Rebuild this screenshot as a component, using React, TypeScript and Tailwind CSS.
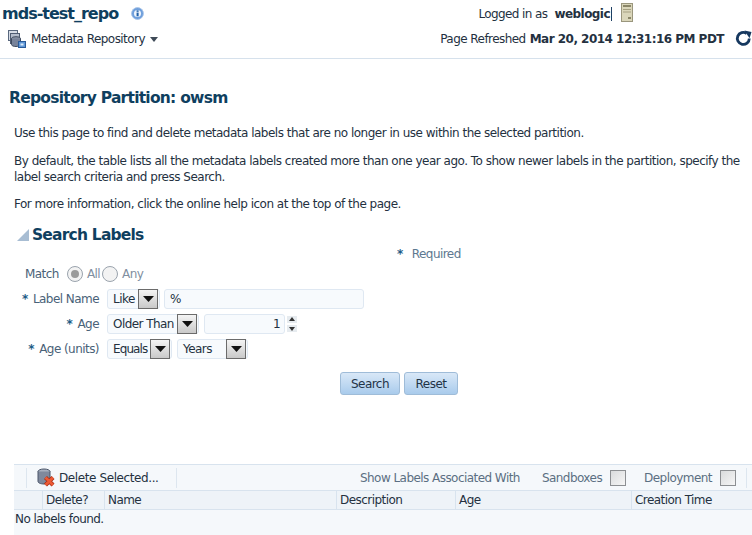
import React from "react";

function InfoIcon() {
  return (
    <svg width="13" height="13" viewBox="0 0 14 14">
      <circle cx="7" cy="7" r="6.4" fill="#6f9fdc" stroke="#a9c5e8" />
      <circle cx="7" cy="7" r="3.8" fill="#eef4fc" />
      <rect x="6" y="6" width="2.2" height="4" fill="#1f5fa8" />
      <rect x="6" y="3.6" width="2.2" height="1.6" fill="#1f5fa8" />
    </svg>
  );
}

function RepoIcon() {
  return (
    <svg width="19" height="19" viewBox="0 0 19 19">
      <rect x="1.500" y="0.500" width="9" height="10" fill="#d6dce6" stroke="#59687e" />
      <rect x="3.500" y="3.500" width="9" height="10" fill="#b4bdcc" stroke="#4f5c72" />
      <ellipse cx="9" cy="8.500" rx="4.500" ry="1.800" fill="#8b95a8" stroke="#3e4a5e" />
      <path d="M4.500 8.500v6c0 1.200 2 2 4.500 2s4.500-.8 4.500-2v-6" fill="#78839a" stroke="#3e4a5e" />
      <rect x="11.500" y="11.500" width="7" height="6" fill="#5f97d6" stroke="#2a5a98" />
      <rect x="13.500" y="13.500" width="3" height="2" fill="#dcebfa" />
    </svg>
  );
}

function ServerIcon() {
  return (
    <svg width="12" height="19" viewBox="0 0 12 19">
      <rect x="0.500" y="0.500" width="11" height="18" fill="#dad6ba" stroke="#9a967d" />
      <rect x="2" y="2" width="8" height="2" fill="#8a8668" />
      <rect x="2" y="6" width="8" height="1" fill="#a5a081" />
      <rect x="2" y="8.500" width="8" height="1" fill="#a5a081" />
      <rect x="7" y="14" width="3" height="2" fill="#8a8668" />
    </svg>
  );
}

function RefreshIcon() {
  return (
    <svg width="17" height="18" viewBox="0 0 17 18" fill="none">
      <path d="M14.300 8.500a6 6 0 1 1-2.600-5" stroke="#16385f" strokeWidth="2.800" />
      <path d="M9.500 0.500l7 1.500-2 6.200z" fill="#16385f" />
    </svg>
  );
}

function DeleteIcon() {
  return (
    <svg width="19" height="19" viewBox="0 0 19 19">
      <ellipse cx="7" cy="3.500" rx="6" ry="2.500" fill="#a8b0bf" stroke="#4a5568" />
      <path d="M1 3.500v10c0 1.400 2.700 2.500 6 2.500s6-1.100 6-2.500v-10" fill="#7f899c" stroke="#4a5568" />
      <path d="M8.500 9.500l7.500 7.500M16 9.500l-7.500 7.500" stroke="#a32a14" strokeWidth="4.200" />
      <path d="M8.500 9.500l7.500 7.500M16 9.500l-7.500 7.500" stroke="#ec5a34" strokeWidth="2.800" />
    </svg>
  );
}

function Caret() {
  return (
    <svg width="8" height="5" viewBox="0 0 8 5">
      <path d="M0 0h8L4 5z" fill="#3f4a57" />
    </svg>
  );
}

function SelectBtn() {
  return (
    <span className="flex h-[20px] w-[20px] shrink-0 items-center justify-center border border-[#6b6b6b] bg-gradient-to-b from-[#f4f4f4] to-[#c9c9c9]">
      <svg width="11" height="6" viewBox="0 0 11 6">
        <path d="M0 0h11L5.500 6z" fill="#111" />
      </svg>
    </span>
  );
}

function Select({ text, w, tight }: { text: string; w: string; tight?: boolean }) {
  return (
    <div className={`flex h-[20px] items-center justify-between rounded-[3px] border border-[#dfe8f2] bg-[#f7fafd] pl-[5px] pr-[1px] ${w}`}>
      <span className={`whitespace-nowrap text-[#24313f] ${tight ? "tracking-[-0.9px]" : ""}`}>{text}</span>
      <SelectBtn />
    </div>
  );
}

function Radio({ checked }: { checked?: boolean }) {
  return (
    <span className="flex h-[16px] w-[16px] items-center justify-center rounded-full border border-[#9aa3ad] bg-[#f3f3f3]">
      {checked && <span className="h-[8px] w-[8px] rounded-full bg-[#9b9b9b]" />}
    </span>
  );
}

function Check() {
  return <span className="h-[16px] w-[16px] border border-[#8c8f92] bg-gradient-to-br from-[#d9dbdc] to-[#f6f6f6]" />;
}

function Star() {
  return <span className="mr-[2px] font-bold text-[#1d5c86]">*</span>;
}

function Row({ label, children }: { label: React.ReactNode; children: React.ReactNode }) {
  return (
    <div className="flex h-[25px] items-center">
      <div className="w-[99px] whitespace-nowrap text-right text-[#4a6278]">{label}</div>
      <div className="ml-[8px] flex items-center gap-[4px]">{children}</div>
    </div>
  );
}

const cols = "grid grid-cols-[28px_62px_232px_119px_176px_107px]";

export default function App() {
  return (
    <div
      className="flex h-[535px] w-[752px] flex-col overflow-hidden bg-white text-[12px] leading-[16px] text-[#24313f]"
      style={{ fontFamily: '"DejaVu Sans", sans-serif', letterSpacing: "-0.55px" }}
    >
      <header className="h-[59px] shrink-0 border-b border-[#d6e1ec] pl-[3px]">
        <div className="flex h-[27px] items-center justify-between">
          <div className="ml-[-1px] flex items-center gap-[13px]">
            <span className="text-[16px] font-bold text-[#0f3f5f]" style={{ letterSpacing: "-1px" }}>mds-test_repo</span>
            <InfoIcon />
          </div>
          <div className="mr-[119px] flex items-center">
            <span className="mr-[7px]" style={{ letterSpacing: "-0.6px" }}>Logged in as</span>
            <span className="font-bold">weblogic</span>
            <span className="mx-[1px] h-[14px] w-px bg-[#1d3f63]" />
            <span className="ml-[8px] mt-[-3px] flex"><ServerIcon /></span>
          </div>
        </div>
        <div className="flex h-[24px] items-center justify-between">
          <div className="flex items-center">
            <span className="ml-[4px]"><RepoIcon /></span>
            <span className="ml-[5px]">Metadata Repository</span>
            <span className="ml-[5px]"><Caret /></span>
          </div>
          <div className="flex items-center">
            <span>Page Refreshed</span>
            <span className="ml-[4px] font-bold" style={{ letterSpacing: "-0.52px" }}>Mar 20, 2014 12:31:16 PM PDT</span>
            <span className="ml-[11px] flex"><RefreshIcon /></span>
          </div>
        </div>
      </header>

      <main className="flex min-h-0 flex-1 flex-col">
        <h1 className="ml-[9px] mt-[29px] text-[15.5px] font-bold leading-[20px] text-[#0f3f5f]" style={{ letterSpacing: "-0.75px" }}>
          Repository Partition: owsm
        </h1>
        <div className="ml-[14px] mr-[8px] mt-[17px]" style={{ letterSpacing: "-0.5px" }}>
          <p>Use this page to find and delete metadata labels that are no longer in use within the selected partition.</p>
          <p className="mt-[12px]">By default, the table lists all the metadata labels created more than one year ago. To show newer labels in the partition, specify the label search criteria and press Search.</p>
          <p className="mt-[11px]">For more information, click the online help icon at the top of the page.</p>
        </div>

        <div className="ml-[17px] mt-[12px] flex h-[22px] items-center gap-[3px]">
          <svg width="12" height="12" viewBox="0 0 12 12"><path d="M12 0v12H0z" fill="#a8bdd3" /></svg>
          <h2 className="text-[15.5px] font-bold text-[#0f3f5f]" style={{ letterSpacing: "-0.8px" }}>Search Labels</h2>
        </div>

        <div className="ml-[397px] mt-[-1px] flex h-[18px] items-center text-[#5d7890]">
          <span className="font-bold text-[#1d5c86]">*</span><span className="ml-[9px]">Required</span>
        </div>

        <div className="mt-[-1px] flex h-[23px] items-center pl-[25px] text-[#4a6278]">
          <span>Match</span>
          <span className="ml-[8px]"><Radio checked /></span>
          <span className="ml-[4px] text-[#7f8f9f]">All</span>
          <span className="ml-[2px]"><Radio /></span>
          <span className="ml-[4px] text-[#7f8f9f]">Any</span>
        </div>

        <div className="mt-[1px] flex flex-col">
          <Row label={<><Star /> Label Name</>}>
            <Select text="Like" w="w-[53px]" />
            <div className="flex h-[20px] w-[200px] items-center rounded-[3px] border border-[#dfe8f2] bg-[#f7fafd] pl-[5px]">%</div>
          </Row>
          <Row label={<><Star /> Age</>}>
            <Select text="Older Than" w="w-[92px]" />
            <div className="ml-[1px] flex items-center gap-[2px]">
              <div className="flex h-[20px] w-[81px] items-center justify-end rounded-[3px] border border-[#dfe8f2] bg-[#f7fafd] pr-[4px]">1</div>
              <div className="flex flex-col gap-[2px]">
                <svg width="10" height="7" viewBox="0 0 10 7"><rect width="10" height="7" fill="#e6ebef" /><path d="M2 5h6L5 1z" fill="#333" /></svg>
                <svg width="10" height="7" viewBox="0 0 10 7"><rect width="10" height="7" fill="#e6ebef" /><path d="M2 2h6L5 6z" fill="#333" /></svg>
              </div>
            </div>
          </Row>
          <Row label={<><Star /> Age (units)</>}>
            <Select text="Equals" w="w-[65px]" tight />
            <div className="ml-[1px]"><Select text="Years" w="w-[71px]" /></div>
          </Row>
        </div>

        <div className="ml-[340px] mt-[11px] flex gap-[4px]">
          <button className="h-[23px] w-[60px] rounded-[3px] border border-[#9fbcd8] bg-gradient-to-b from-[#d9e8f7] to-[#a9cbec] text-[#1f3347]">Search</button>
          <button className="h-[23px] w-[54px] rounded-[3px] border border-[#9fbcd8] bg-gradient-to-b from-[#d9e8f7] to-[#a9cbec] text-[#1f3347]">Reset</button>
        </div>

        <section className="ml-[14px] mt-[69px] flex min-h-0 flex-1 flex-col bg-[#f5f8fb]">
          <div className="flex h-[27px] shrink-0 items-center border-y border-[#d8e3ee] pr-[5px]">
            <span className="ml-[12px] h-[20px] w-px bg-[#dde6ef]" />
            <span className="ml-[10px] flex"><DeleteIcon /></span>
            <span className="ml-[3px]" style={{ letterSpacing: "-0.4px" }}>Delete Selected...</span>
            <span className="ml-[17px] h-[20px] w-px bg-[#dde6ef]" />
            <div className="ml-auto flex items-center text-[#5b6f82]">
              <span>Show Labels Associated With</span>
              <span className="ml-[22px]">Sandboxes</span>
              <span className="ml-[8px] flex"><Check /></span>
              <span className="ml-[18px]">Deployment</span>
              <span className="ml-[8px] flex"><Check /></span>
              <span className="ml-[10px] h-[20px] w-px bg-[#dde6ef]" />
            </div>
          </div>
          <div className={`${cols} h-[19px] shrink-0 items-center border-b border-[#d8e3ee] bg-[#eef3f8]`}>
            <span />
            <span className="flex h-full items-center border-l border-[#d8e3ee] pl-[3px]">Delete?</span>
            <span className="flex h-full items-center border-l border-[#d8e3ee] pl-[3px]">Name</span>
            <span className="flex h-full items-center border-l border-[#d8e3ee] pl-[3px]">Description</span>
            <span className="flex h-full items-center border-l border-[#d8e3ee] pl-[3px]">Age</span>
            <span className="flex h-full items-center border-l border-[#d8e3ee] pl-[3px]">Creation Time</span>
          </div>
          <div className="pl-[1px] pt-[1px]">No labels found.</div>
        </section>
      </main>
    </div>
  );
}
